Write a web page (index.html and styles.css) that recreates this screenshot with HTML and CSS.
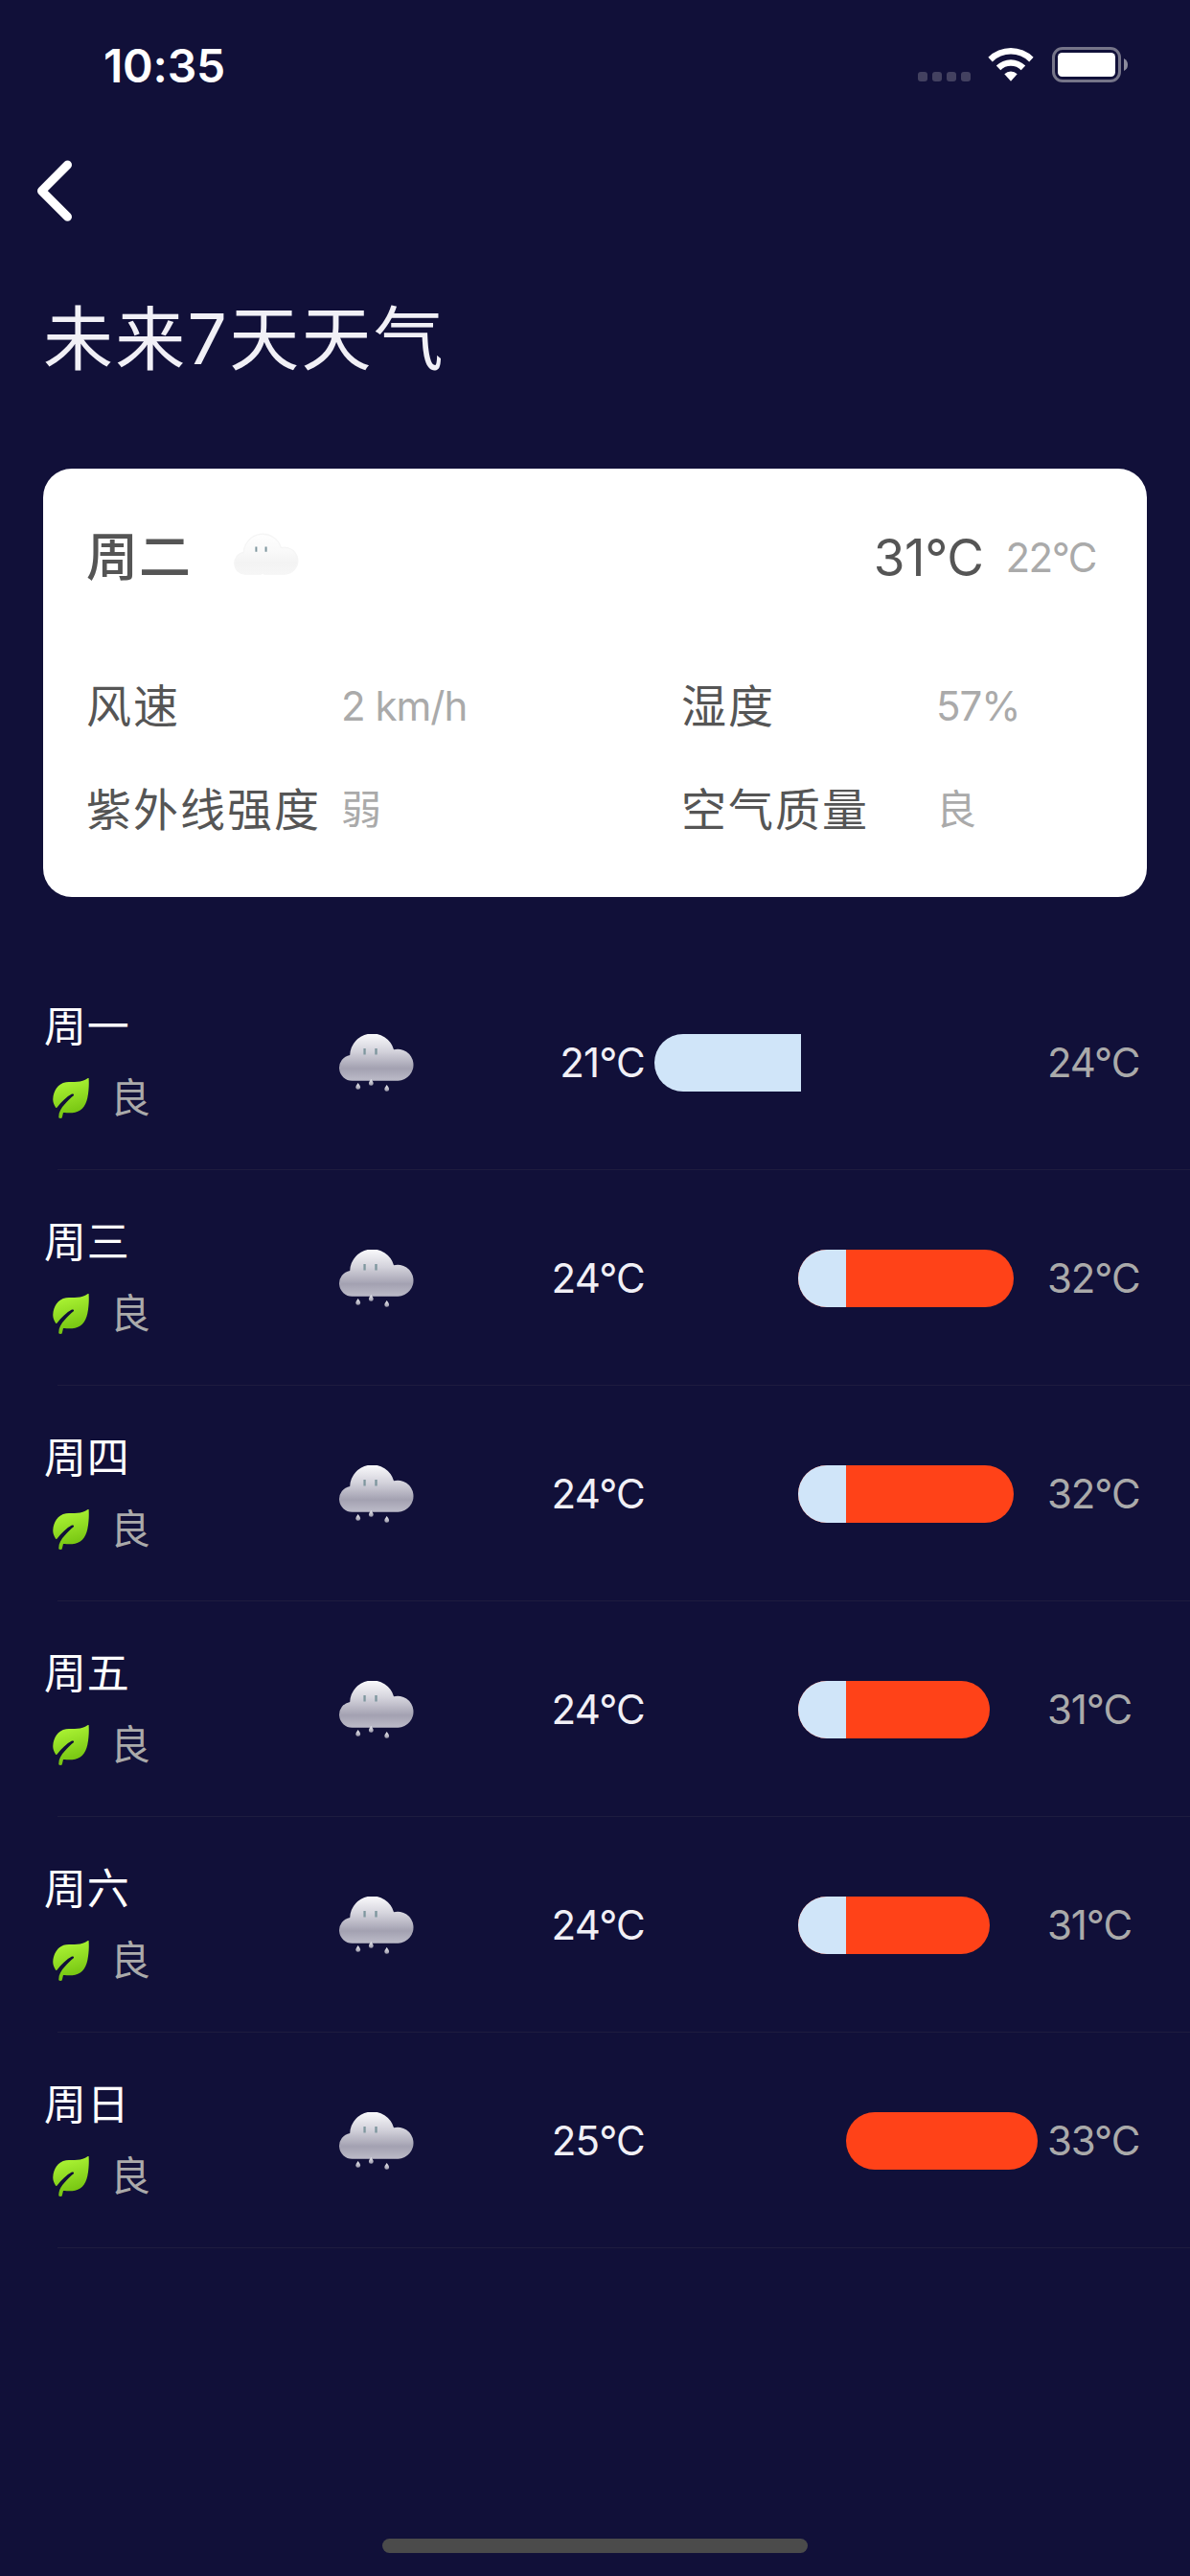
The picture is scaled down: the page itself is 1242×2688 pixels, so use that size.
FILE: index.html
```html
<!DOCTYPE html>
<html lang="zh-CN">
<head>
<meta charset="utf-8">
<title>未来7天天气</title>
<link rel="stylesheet" href="styles.css">
</head>
<body>
<svg class="sprite" aria-hidden="true">
  <defs>
    <linearGradient id="rain-fill" x1="0" y1="0" x2="0" y2="1">
      <stop offset="0" stop-color="#fafafc"/>
      <stop offset=".38" stop-color="#d3d2db"/>
      <stop offset=".74" stop-color="#a3a1b1"/>
      <stop offset="1" stop-color="#bcbbc8"/>
    </linearGradient>
    <linearGradient id="cloud-fill" x1="0" y1="0" x2="0" y2="1">
      <stop offset="0" stop-color="#fefefe"/>
      <stop offset=".45" stop-color="#f9f9f9"/>
      <stop offset=".72" stop-color="#f3f3f3"/>
      <stop offset="1" stop-color="#f6f6f6"/>
    </linearGradient>
    <linearGradient id="drop-fill" x1="0" y1="0" x2="0" y2="1">
      <stop offset="0" stop-color="#eeeef2"/>
      <stop offset="1" stop-color="#9a98a9"/>
    </linearGradient>
    <linearGradient id="leaf-fill" x1="0" y1="0" x2=".25" y2="1">
      <stop offset="0" stop-color="#b4fb3a"/>
      <stop offset="1" stop-color="#74c310"/>
    </linearGradient>
  </defs>
  <symbol id="rain" viewBox="0 0 78 60">
    <path fill="url(#rain-fill)" d="M13.5 48.7A13.5 13.5 0 0 1 11.2 21.9A23.4 23.4 0 0 1 57 16.2A16.5 16.5 0 1 1 61.5 48.7Z"/>
    <path fill="#7f979f" d="M25.4 15h2.3v6.5h-2.3zM37.3 15h2.4v6.5h-2.4z"/>
    <path fill="url(#drop-fill)" d="M19.7 51q2.4 3 2.4 4.6a2.4 2.2 0 0 1-4.8 0q0-1.6 2.4-4.6z"/>
    <path fill="url(#drop-fill)" d="M33.3 47q2.4 3 2.4 4.6a2.4 2.2 0 0 1-4.8 0q0-1.6 2.4-4.6z"/>
    <path fill="url(#drop-fill)" d="M49.7 53q2.4 3 2.4 4.6a2.4 2.2 0 0 1-4.8 0q0-1.6 2.4-4.6z"/>
  </symbol>
  <symbol id="cloud" viewBox="-2 -2 82 54">
    <path fill="url(#cloud-fill)" stroke="#f5f5f5" stroke-width="1.5" d="M13.5 48.7A13.5 13.5 0 0 1 11.2 21.9A23.4 23.4 0 0 1 57 16.2A16.5 16.5 0 1 1 61.5 48.7H36.5L34.5 47L32.5 48.7Z"/>
    <path fill="#7f979f" d="M25.4 15h2.3v6.2h-2.3zM37.3 15h2.4v6.2h-2.4z"/>
  </symbol>
  <symbol id="leaf" viewBox="0 0 38 42">
    <path fill="url(#leaf-fill)" d="M37.6 0C38 6 37.8 13 36.3 20.5C34.5 30 29 35.5 20.5 36.3C17 36.500 13.5 36 11 35.9L9.7 41.5Q8 42.6 6.3 41.3C6 36 8.5 31.5 13 26.8C15.5 24 19 20.5 21.8 18.3C22.6 17.2 21.5 15.900 20 16.6C14.5 19.5 9 25 4.6 30.6Q3.8 31.3 3 30.4C1 27.5 .1 24.5 .3 21.500C.8 14 5 5.5 14 4.3C22 3.4 30 5.2 36.4 .2Q37.2 -.3 37.6 0Z"/>
  </symbol>
</svg>

<div class="screen">
  <header class="status">
    <span class="clock">10:35</span>
    <div class="indicators">
      <div class="signal"><i></i><i></i><i></i><i></i></div>
      <svg class="wifi" viewBox="0 0 48 36" fill="#fff">
        <path d="M.4 10.8A33.5 33.5 0 0 1 47.6 10.8L43.2 15.4A27.2 27.2 0 0 0 4.8 15.4Z"/>
        <path d="M8.8 19.5A21.7 21.7 0 0 1 39.2 19.5L34.7 24.2A15.3 15.3 0 0 0 13.3 24.2Z"/>
        <path d="M17.3 28.3A9.7 9.7 0 0 1 30.7 28.3L24 35.7Z"/>
      </svg>
      <svg class="battery" viewBox="0 0 80 37">
        <rect x="1.5" y="1.5" width="69" height="34" rx="9.5" fill="none" stroke="#767589" stroke-width="3"/>
        <rect x="6" y="6" width="60" height="25" rx="4.5" fill="#fff"/>
        <path d="M75 12q4 2 4 6.5t-4 6.5z" fill="#8d8c9d"/>
      </svg>
    </div>
  </header>

  <nav class="nav">
    <svg class="back" viewBox="0 0 38 64"><path d="M32.5 5L5.5 32.2L32.5 59.3" fill="none" stroke="#fff" stroke-width="9" stroke-linecap="round" stroke-linejoin="round"/></svg>
  </nav>

  <h1 class="title">未来7天天气</h1>

  <section class="card">
    <div class="card-head">
      <span class="card-day">周二</span>
      <svg class="card-icon"><use href="#cloud"/></svg>
      <span class="card-high">31°C</span>
      <span class="card-low">22°C</span>
    </div>
    <dl class="facts">
      <dt>风速</dt><dd>2 km/h</dd>
      <dt>湿度</dt><dd>57%</dd>
      <dt>紫外线强度</dt><dd>弱</dd>
      <dt>空气质量</dt><dd>良</dd>
    </dl>
  </section>

  <ul class="days">
    <li class="day">
      <div class="info"><span class="name">周一</span><span class="air"><svg class="leaf"><use href="#leaf"/></svg>良</span></div>
      <svg class="rain"><use href="#rain"/></svg>
      <span class="low">21°C</span>
      <div class="range"><span class="bar open" style="margin-left:0;width:153px"><i class="cool" style="width:153px"></i></span></div>
      <span class="high">24°C</span>
    </li>
    <li class="day">
      <div class="info"><span class="name">周三</span><span class="air"><svg class="leaf"><use href="#leaf"/></svg>良</span></div>
      <svg class="rain"><use href="#rain"/></svg>
      <span class="low">24°C</span>
      <div class="range"><span class="bar" style="margin-left:150px;width:225px"><i class="cool" style="width:50px"></i></span></div>
      <span class="high">32°C</span>
    </li>
    <li class="day">
      <div class="info"><span class="name">周四</span><span class="air"><svg class="leaf"><use href="#leaf"/></svg>良</span></div>
      <svg class="rain"><use href="#rain"/></svg>
      <span class="low">24°C</span>
      <div class="range"><span class="bar" style="margin-left:150px;width:225px"><i class="cool" style="width:50px"></i></span></div>
      <span class="high">32°C</span>
    </li>
    <li class="day">
      <div class="info"><span class="name">周五</span><span class="air"><svg class="leaf"><use href="#leaf"/></svg>良</span></div>
      <svg class="rain"><use href="#rain"/></svg>
      <span class="low">24°C</span>
      <div class="range"><span class="bar" style="margin-left:150px;width:200px"><i class="cool" style="width:50px"></i></span></div>
      <span class="high">31°C</span>
    </li>
    <li class="day">
      <div class="info"><span class="name">周六</span><span class="air"><svg class="leaf"><use href="#leaf"/></svg>良</span></div>
      <svg class="rain"><use href="#rain"/></svg>
      <span class="low">24°C</span>
      <div class="range"><span class="bar" style="margin-left:150px;width:200px"><i class="cool" style="width:50px"></i></span></div>
      <span class="high">31°C</span>
    </li>
    <li class="day">
      <div class="info"><span class="name">周日</span><span class="air"><svg class="leaf"><use href="#leaf"/></svg>良</span></div>
      <svg class="rain"><use href="#rain"/></svg>
      <span class="low">25°C</span>
      <div class="range"><span class="bar" style="margin-left:200px;width:200px"></span></div>
      <span class="high">33°C</span>
    </li>
  </ul>

  <div class="home"></div>
</div>
</body>
</html>
```
FILE: styles.css
```css
* { box-sizing: border-box; margin: 0; padding: 0; }
html, body { background: #111039; }
body {
  font-family: Inter, "Noto Sans CJK SC", sans-serif;
  color: #fff;
  overflow: hidden;
}
.sprite { display: block; width: 0; height: 0; }
.screen {
  display: flex;
  flex-direction: column;
  width: 1242px;
  height: 2688px;
}
svg { display: block; flex: none; }

.status {
  display: flex;
  justify-content: space-between;
  align-items: flex-start;
  height: 132px;
  padding: 49px 64px 0 108px;
}
.clock { font-size: 48px; font-weight: 600; line-height: 39px; letter-spacing: -.2px; }
.indicators { display: flex; align-items: flex-start; }
.signal { display: flex; gap: 5px; margin: 26px 18px 0 0; }
.signal i { width: 10px; height: 10px; border-radius: 3px; background: #434160; }
.wifi { width: 48px; height: 36px; margin-right: 19px; }
.battery { width: 80px; height: 37px; }

.nav { height: 132px; padding: 35px 0 0 38px; }
.back { width: 38px; height: 64px; }

.title {
  height: 180px;
  padding-left: 45px;
  font-size: 73px;
  font-weight: 400;
  line-height: 180px;
  letter-spacing: 2.3px;
  color: #f1f0f6;
}

.card {
  width: 1152px;
  height: 447px;
  margin: 45px 45px 60px;
  padding: 48px 0 0 45px;
  border-radius: 30px;
  background: #fff;
  color: #555;
  line-height: 60px;
}
.card-head {
  display: flex;
  align-items: center;
  height: 90px;
  padding-right: 53px;
}
.card-day { width: 153px; font-size: 54px; font-weight: 500; letter-spacing: 1px; }
.card-icon { width: 70px; height: 46px; margin-bottom: 7px; }
.card-high { margin-left: auto; font-size: 53px; letter-spacing: -.5px; }
.card-low { margin-left: 23px; font-size: 42px; letter-spacing: -1.5px; color: #aaa; }
.facts {
  display: grid;
  grid-template-columns: 266px 355px 266px 1fr;
  grid-auto-rows: 108px;
  align-items: center;
  margin-top: 56px;
}
.facts dt { font-size: 47px; letter-spacing: 2px; white-space: nowrap; }
.facts dd { font-size: 42px; letter-spacing: -1px; color: #aaa; }

.days { list-style: none; }
.day {
  display: grid;
  grid-template-columns: 308px 78px 243px 400px 1fr;
  align-items: center;
  height: 225px;
  padding-left: 46px;
  background: linear-gradient(#1e1c3f, #1e1c3f) 60px 100% / 100% 1px no-repeat;
}
.info { display: flex; flex-direction: column; }
.name { height: 74px; font-size: 44px; line-height: 72px; letter-spacing: .7px; }
.air {
  display: flex;
  align-items: center;
  gap: 22px;
  height: 74px;
  padding-left: 9px;
  font-size: 42px;
  line-height: 75px;
  color: #aaa;
}
.leaf { width: 38px; height: 42px; }
.rain { width: 78px; height: 60px; }
.low {
  padding-right: 2px;
  font-size: 42px;
  letter-spacing: -.8px;
  text-align: right;
  color: #f1f0f6;
}
.high { padding-left: 18px; font-size: 42px; letter-spacing: -1.1px; color: #aaa; }
.range { padding-left: 8px; }
.bar {
  display: block;
  height: 60px;
  border-radius: 30px;
  background: #ff4218;
  overflow: hidden;
}
.bar.open { border-radius: 30px 0 0 30px; }
.cool { display: block; height: 60px; background: #d0e5f9; }

.home {
  width: 444px;
  height: 15px;
  margin: auto auto 24px;
  border-radius: 7.5px;
  background: #4b4b4b;
}
```
